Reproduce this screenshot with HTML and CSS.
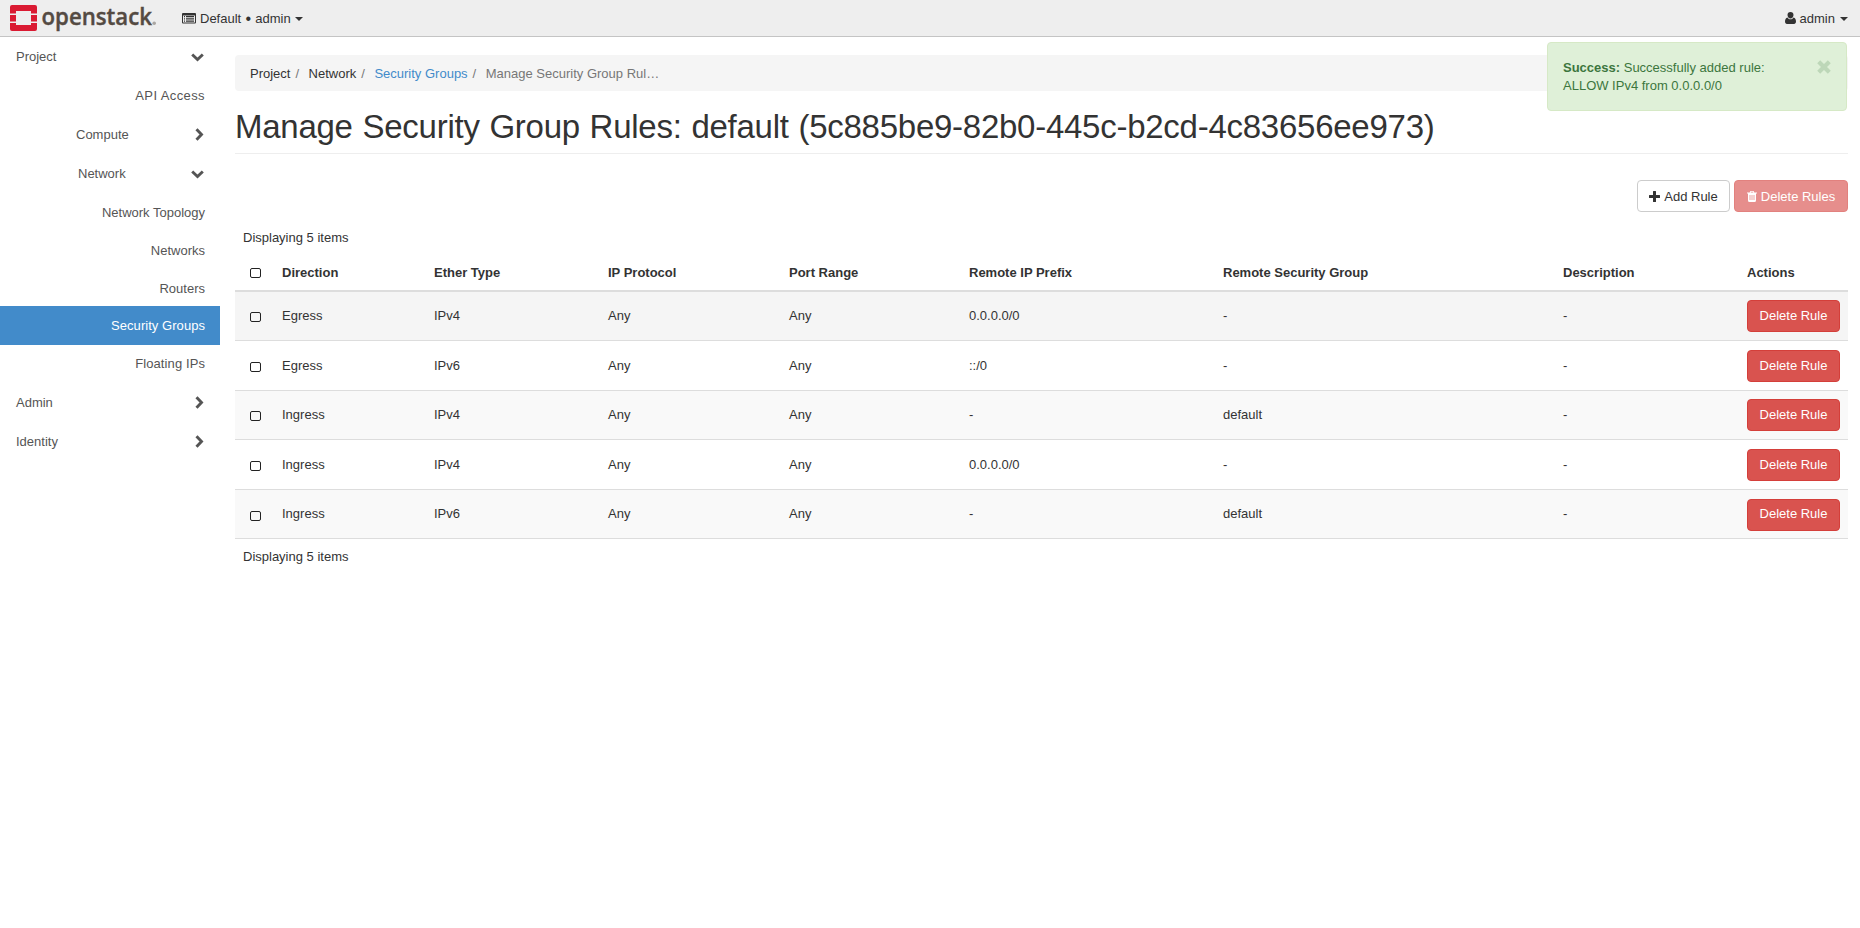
FILE: index.html
```html
<!DOCTYPE html>
<html lang="en">
<head>
<meta charset="utf-8">
<title>Manage Security Group Rules - OpenStack Dashboard</title>
<link rel="stylesheet" href="styles.css">
</head>
<body>
<header class="navbar">
  <a class="brand">
    <svg width="160" height="36" viewBox="-10 -5 160 36">
      <path fill="#da1a32" d="M2 0h23a2 2 0 0 1 2 2v6.500h-6V6H6v2.500H0V2a2 2 0 0 1 2-2zM0 10h6v6.500H0zM21 10h6v6.500h-6zM0 18h6v2h15v-2h6v6a2 2 0 0 1-2 2H2a2 2 0 0 1-2-2z"/>
      <text class="brand-text" x="31.500" y="19.800" textLength="110.500" lengthAdjust="spacingAndGlyphs">openstack</text>
      <circle cx="144.200" cy="18.300" r="1.800" fill="#aaa6a2"/>
    </svg>
  </a>
  <div class="context">
    <svg class="icon-list" width="14" height="11" viewBox="0 0 14 11"><path fill="#333" fill-rule="evenodd" d="M1 0h12a1 1 0 0 1 1 1v8.500a1 1 0 0 1-1 1H1a1 1 0 0 1-1-1V1a1 1 0 0 1 1-1zM1 2.500v7h12v-7zM2 3h1v1.300H2zM4 3h8v1.300H4zM2 5.200h1v1.300H2zM4 5.200h8v1.300H4zM2 7.400h1v1.300H2zM4 7.400h8v1.300H4z"/></svg>
    <span>Default</span><span class="bullet">•</span><span>admin</span><i class="caret"></i>
  </div>
  <div class="user">
    <svg class="icon-user" width="11" height="12" viewBox="0 0 11 12"><path fill="#333" d="M5.500 0a3 3 0 0 1 3 3.100c0 1.900-1.300 3.500-3 3.500s-3-1.600-3-3.500A3 3 0 0 1 5.500 0zM2.500 5.500C3.300 6.800 4.300 7.300 5.500 7.300s2.200-.5 3-1.800C10.300 5.900 11 7.600 11 9.600 11 11.100 10.200 12 9 12H2c-1.200 0-2-.9-2-2.400 0-2 .7-3.700 2.500-4.100z"/></svg>
    <span>admin</span><i class="caret"></i>
  </div>
</header>
<div class="layout">
  <nav class="sidebar">
    <a class="item top">Project<svg class="chev" width="13" height="9" viewBox="0 0 13 9"><path d="M1.200 1.500 6.500 6.500l5.300-5"/></svg></a>
    <a class="item leaf wide">API Access</a>
    <a class="item group compute">Compute<svg class="chev right" width="9" height="13" viewBox="0 0 9 13"><path d="M1.500 1.200 6.500 6.500l-5 5.300"/></svg></a>
    <a class="item group network">Network<svg class="chev" width="13" height="9" viewBox="0 0 13 9"><path d="M1.200 1.500 6.500 6.500l5.300-5"/></svg></a>
    <a class="item leaf sub">Network Topology</a>
    <a class="item leaf sub">Networks</a>
    <a class="item leaf last">Routers</a>
    <a class="item leaf active">Security Groups</a>
    <a class="item leaf loose">Floating IPs</a>
    <a class="item top">Admin<svg class="chev right" width="9" height="13" viewBox="0 0 9 13"><path d="M1.500 1.200 6.500 6.500l-5 5.300"/></svg></a>
    <a class="item top">Identity<svg class="chev right" width="9" height="13" viewBox="0 0 9 13"><path d="M1.500 1.200 6.500 6.500l-5 5.300"/></svg></a>
  </nav>
  <main class="content">
    <ol class="breadcrumb"><li>Project</li><li>Network</li><li><a class="link">Security Groups</a></li><li class="current">Manage Security Group Rul…</li></ol>
    <h1 class="title">Manage Security Group Rules: default (5c885be9-82b0-445c-b2cd-4c83656ee973)</h1>
    <div class="actions">
      <button class="btn btn-default"><svg width="11" height="11" viewBox="0 0 11 11"><path fill="#333" d="M4 .5A.5.5 0 0 1 4.500 0h2a.5.5 0 0 1 .5.500V4h3.500a.5.5 0 0 1 .5.500v2a.5.5 0 0 1-.5.500H7v3.500a.5.5 0 0 1-.5.500h-2a.5.500 0 0 1-.5-.5V7H.5a.5.500 0 0 1-.5-.5v-2A.5.500 0 0 1 .5 4H4z"/></svg>Add Rule</button>
      <button class="btn btn-danger disabled"><svg width="10" height="11" viewBox="0 0 10 11"><path fill="#fff" fill-rule="evenodd" d="M3.400 0h3.200l.7 1.500H10v1H9V9.500A1.500 1.500 0 0 1 7.500 11h-5A1.500 1.500 0 0 1 1 9.500v-7H0v-1h2.700zM4 .8l-.3.700h2.600L6 .8zM2.600 4v5h.8V4zM4.600 4v5h.8V4zM6.600 4v5h.8V4z"/></svg>Delete Rules</button>
    </div>
    <table class="rules">
      <caption>Displaying 5 items</caption>
      <colgroup><col class="c0"><col class="c1"><col class="c2"><col class="c3"><col class="c4"><col class="c5"><col class="c6"><col class="c7"><col class="c8"></colgroup>
      <thead><tr><th><i class="check"></i></th><th>Direction</th><th>Ether Type</th><th>IP Protocol</th><th>Port Range</th><th>Remote IP Prefix</th><th>Remote Security Group</th><th>Description</th><th>Actions</th></tr></thead>
      <tbody>
        <tr class="hover"><td><i class="check"></i></td><td>Egress</td><td>IPv4</td><td>Any</td><td>Any</td><td>0.0.0.0/0</td><td>-</td><td>-</td><td><button class="btn btn-danger">Delete Rule</button></td></tr>
        <tr class="low"><td><i class="check"></i></td><td>Egress</td><td>IPv6</td><td>Any</td><td>Any</td><td>::/0</td><td>-</td><td>-</td><td><button class="btn btn-danger">Delete Rule</button></td></tr>
        <tr><td><i class="check"></i></td><td>Ingress</td><td>IPv4</td><td>Any</td><td>Any</td><td>-</td><td>default</td><td>-</td><td><button class="btn btn-danger">Delete Rule</button></td></tr>
        <tr class="low"><td><i class="check"></i></td><td>Ingress</td><td>IPv4</td><td>Any</td><td>Any</td><td>0.0.0.0/0</td><td>-</td><td>-</td><td><button class="btn btn-danger">Delete Rule</button></td></tr>
        <tr class="low"><td><i class="check"></i></td><td>Ingress</td><td>IPv6</td><td>Any</td><td>Any</td><td>-</td><td>default</td><td>-</td><td><button class="btn btn-danger">Delete Rule</button></td></tr>
      </tbody>
    </table>
    <div class="count">Displaying 5 items</div>
  </main>
</div>
<div class="alert">
  <p><strong>Success:</strong> Successfully added rule: ALLOW IPv4 from 0.0.0.0/0</p>
  <svg width="14" height="14" viewBox="0 0 14 14"><path stroke="#bdd7b8" stroke-width="4.200" d="M1.700 1.700l10.600 10.600M12.300 1.700 1.700 12.300"/></svg>
</div>
</body>
</html>
```
FILE: styles.css
```css
* { box-sizing: border-box; }
body { margin: 0; background: #fff; color: #333; font: 13px/18.57px "Liberation Sans", Arial, sans-serif; }
button { font: inherit; }
.navbar { display: flex; align-items: flex-start; height: 37px; background: #eee; border-bottom: 1px solid #c4c4c4; }
.brand { width: 182px; height: 36px; }
.brand svg { display: block; overflow: visible; }
.brand-text { font: 600 24px "Open Sans", sans-serif; fill: #544a42; stroke: #544a42; stroke-width: .4px; }
.context, .user { display: flex; align-items: center; height: 36px; padding-top: 2px; }
.icon-list { margin: -1px 4px 0 0; }
.icon-user { margin: -2px 4px 0 0; }
.bullet { width: 14px; text-align: center; font-size: 16px; }
.caret { width: 0; height: 0; margin: -1px 0 0 4px; border: 4px solid transparent; border-top-color: #333; border-bottom: 0; }
.user { margin-left: auto; padding-right: 12px; }
.user .caret { margin-left: 5px; }
.layout { display: flex; }
.sidebar { width: 220px; flex: none; color: #555; }
.item { display: flex; align-items: center; height: 39px; padding: 1px 16px 0; }
.leaf { justify-content: flex-end; padding-right: 15px; }
.wide { letter-spacing: .4px; }
.loose { letter-spacing: .1px; }
.sub { height: 38px; padding-top: 2px; }
.last { height: 37px; padding-top: 3px; }
.active { background: #428bca; color: #fff; margin-bottom: -1px; letter-spacing: .05px; }
.compute { padding-left: 76px; }
.network { padding-left: 78px; }
.chev { margin-left: auto; fill: none; stroke: #555; stroke-width: 2.9; }
.right { margin-top: -2px; }
.content { width: 1628px; padding: 18px 0 0 15px; flex: none; }
.breadcrumb { display: flex; list-style: none; margin: 0; padding: 10px 15px 7px; height: 36px; background: #f5f5f5; border-radius: 4px; }
.breadcrumb li + li::before { content: "/"; color: #777; padding: 0 9.5px 0 5px; }
.link { color: #428bca; }
.current { color: #777; }
.title { margin: 17px 0 0; height: 46px; font-size: 33px; line-height: 37px; letter-spacing: -.258px; word-spacing: .87px; border-bottom: 1px solid #eee; font-weight: 400; white-space: nowrap; }
.actions { display: flex; justify-content: flex-end; gap: 4px; margin-top: 26px; }
.btn { display: flex; align-items: center; justify-content: center; width: 93px; height: 32px; padding: 2px 0 0; border: 1px solid #ccc; border-radius: 4px; background: #fff; color: #333; white-space: nowrap; }
.btn svg { margin: -2px 4px 0 0; }
.btn-danger { background: #d9534f; border-color: #d43f3a; color: #fff; }
.disabled { opacity: .65; width: 114px; }
.rules { width: 1613px; table-layout: fixed; border-collapse: collapse; margin-top: 8px; }
.rules caption { text-align: left; padding: 9px 8px 6px; height: 35px; }
.c0 { width: 39px; } .c1 { width: 152px; } .c2 { width: 174px; } .c3 { width: 181px; } .c4 { width: 180px; }
.c5 { width: 254px; } .c6 { width: 340px; } .c7 { width: 184px; } .c8 { width: 109px; }
.rules th { height: 36px; padding: 1px 8px 0; text-align: left; border-bottom: 2px solid #ddd; }
.rules td { height: 49.6px; padding: 0 8px; border-bottom: 1px solid #ddd; }
.rules .low td { padding-top: 1px; }
.rules td .btn { padding-top: 0; }
.rules tbody tr:nth-child(odd) { background: #f9f9f9; }
.rules tbody tr.hover { background: #f5f5f5; }
.check { display: block; width: 11px; height: 10px; margin: 0 0 0 7px; border: 1px solid #222; border-radius: 2px; }
.rules td .check { margin-top: 2px; }
.count { padding: 9px 8px; }
.alert { position: absolute; top: 42px; right: 13px; width: 300px; height: 69px; display: flex; justify-content: space-between; align-items: flex-start; padding: 15px 15px 0; background: #dff0d8; border: 1px solid #d6e9c6; border-radius: 4px; color: #3c763d; }
.alert p { margin: 0; width: 215px; padding-top: 1px; line-height: 18px; }
.alert svg { margin-top: 2px; }
```
